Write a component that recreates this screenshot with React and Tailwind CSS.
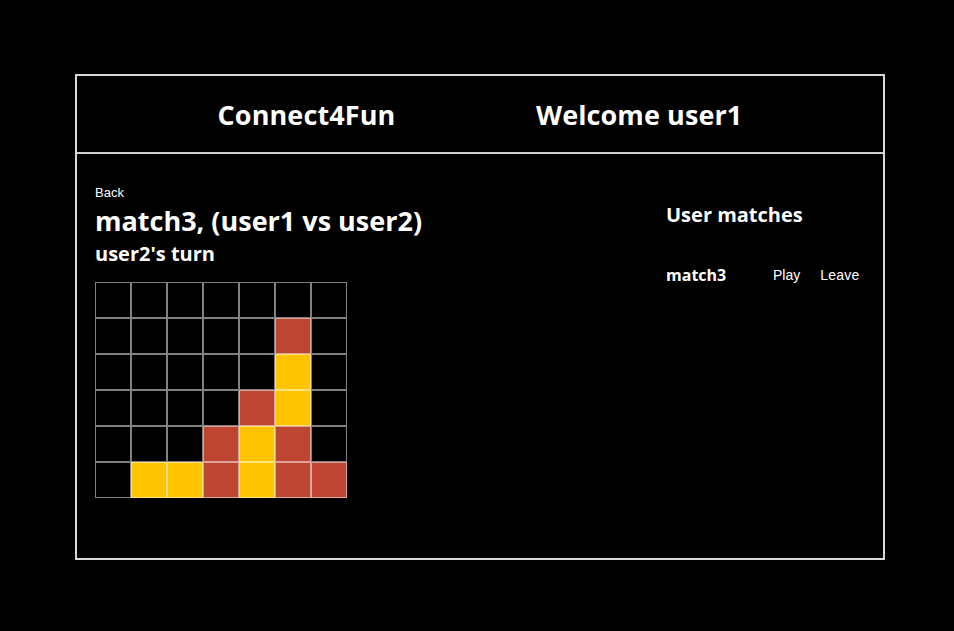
import React from "react";

const board = [
  [0, 0, 0, 0, 0, 0, 0],
  [0, 0, 0, 0, 0, 1, 0],
  [0, 0, 0, 0, 0, 2, 0],
  [0, 0, 0, 0, 1, 2, 0],
  [0, 0, 0, 1, 2, 1, 0],
  [0, 2, 2, 1, 2, 1, 1],
];

const cellColor = ["bg-black", "bg-[#bc4632]", "bg-[#ffc300]"];

const App = () => {
  return (
    <div
      className="min-h-screen bg-black text-white pt-[74px] pl-[75px]"
      style={{ fontFamily: "'Open Sans', 'Noto Sans', sans-serif" }}
    >
      <div className="w-[810px] h-[486px] border-2 border-[#d8d8d8] flex flex-col">
        {/* Header */}
        <div className="h-[78px] pt-[2px] border-b-2 border-[#d0d0d0] flex items-center justify-evenly">
          <h1 className="text-[27px] font-bold tracking-[0.1px]">Connect4Fun</h1>
          <h1 className="text-[27px] font-bold tracking-[0.1px]">Welcome user1</h1>
        </div>

        {/* Body */}
        <div className="flex flex-1">
          <div className="flex-1 pl-[18px] pt-[31px]">
            <button
              className="block text-[13px] leading-[16px] text-white"
              style={{ fontFamily: "'Liberation Sans', Arial, sans-serif" }}
            >
              Back
            </button>
            <h2 className="text-[27px] font-bold leading-[38px] mt-[1px]">
              match3, (user1 vs user2)
            </h2>
            <h3 className="text-[20px] font-bold leading-[28px]">
              user2's turn
            </h3>
            <div className="mt-[14px] flex flex-col w-fit">
              {board.map((row, r) => (
                <div key={r} className="flex">
                  {row.map((c, i) => (
                    <div
                      key={i}
                      className={`w-[36px] h-[36px] border border-white/50 ${cellColor[c]}`}
                    />
                  ))}
                </div>
              ))}
            </div>
          </div>

          <div className="w-[217px] pt-[47px]">
            <h3 className="text-[20px] font-bold leading-[28px]">User matches</h3>
            <div className="mt-[34px] flex items-center">
              <span className="w-[107px] text-[16px] font-bold">match3</span>
              <button
                className="text-[14px] text-white"
                style={{ fontFamily: "'Liberation Sans', Arial, sans-serif" }}
              >
                Play
              </button>
              <button
                className="ml-[20px] text-[14px] text-white tracking-[0.2px]"
                style={{ fontFamily: "'Liberation Sans', Arial, sans-serif" }}
              >
                Leave
              </button>
            </div>
          </div>
        </div>
      </div>
    </div>
  );
};

export default App;
